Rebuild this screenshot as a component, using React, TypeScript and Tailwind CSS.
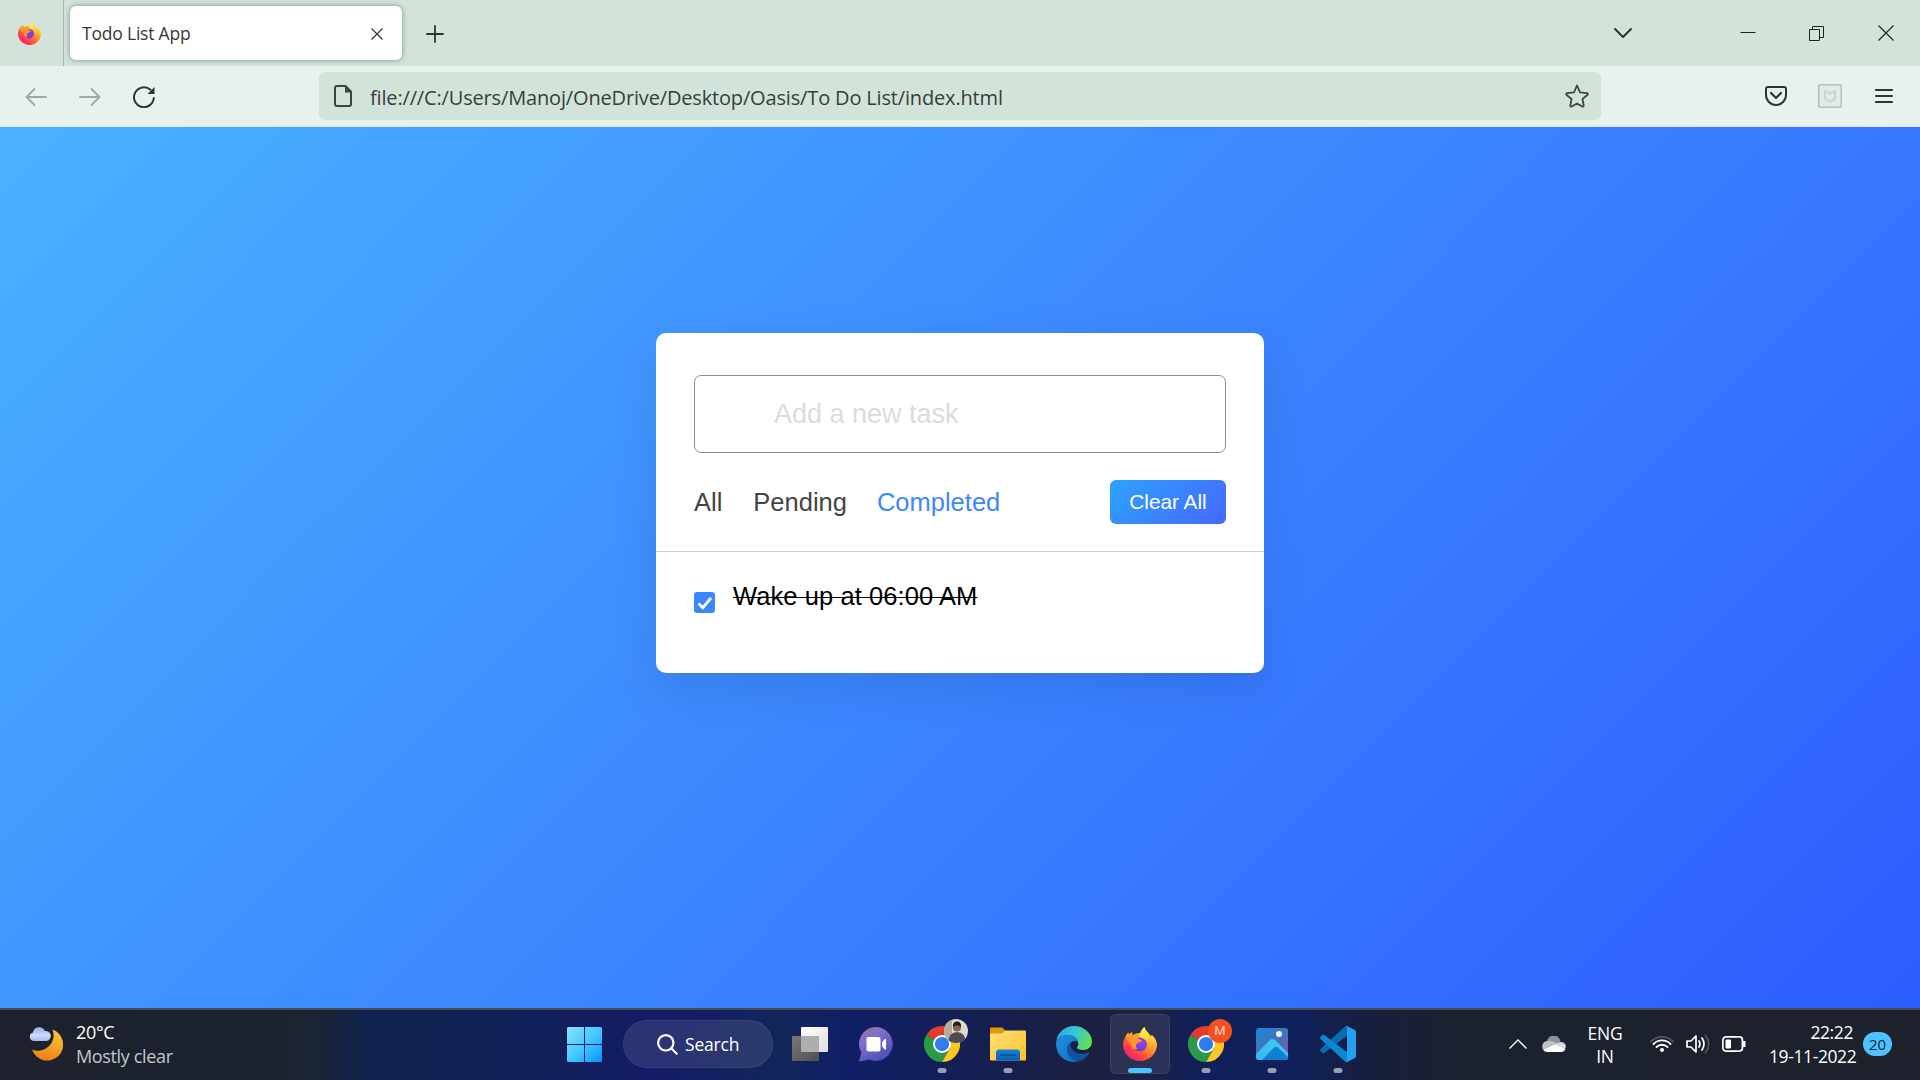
import React from "react";

const UI = "font-['Open_Sans','Noto_Sans',sans-serif]";

function FirefoxIcon({ id, className }: { id: string; className: string }) {
  return (
    <svg viewBox="0 0 34 34" className={className}>
      <defs>
        <linearGradient id={`${id}-body`} x1="0.85" y1="0.1" x2="0.2" y2="0.95">
          <stop offset="0" stopColor="#fff44f" />
          <stop offset="0.3" stopColor="#ffae2e" />
          <stop offset="0.6" stopColor="#ff6a30" />
          <stop offset="0.85" stopColor="#ff2f55" />
          <stop offset="1" stopColor="#f0208a" />
        </linearGradient>
        <linearGradient id={`${id}-ear`} x1="0.4" y1="0" x2="0.6" y2="1">
          <stop offset="0" stopColor="#fff650" />
          <stop offset="0.4" stopColor="#ffd93a" />
          <stop offset="1" stopColor="#ff9a2b" />
        </linearGradient>
        <radialGradient id={`${id}-globe`} cx="0.6" cy="0.3" r="0.8">
          <stop offset="0" stopColor="#a238f0" />
          <stop offset="0.6" stopColor="#7542e5" />
          <stop offset="1" stopColor="#5b3ac4" />
        </radialGradient>
      </defs>
      <path
        d="M3 8.5 5.2 5.6 5.9 7.6 9 5 9.4 8.2C12 6.5 15 5.8 17.6 6 18.2 3.7 19.6 1.6 21.4 0c.8 2.4 2 4.100 4.300 6.400.9 1 1.600 2 2.200 3.200L28.600 8C31.500 10 34 14 34 18.500 33 27.600 26 34 17 34S0 26.800 0 17.500C.1 14 1.400 11 3 8.500Z"
        fill={`url(#${id}-body)`}
      />
      <path
        d="M16 9.500C17 5 19 2 21.400 0c.8 2.400 2 4.100 4.300 6.400C29.500 10.500 31 17 26.500 24 28 17 23 11 16 9.500Z"
        fill={`url(#${id}-ear)`}
      />
      <circle cx="17" cy="17.500" r="6.800" fill={`url(#${id}-globe)`} />
      <path
        d="M3 8.500 5.200 5.600 5.900 7.600 9 5 9.400 8.600C11.600 8.600 13.500 9.800 14.600 11.600 16 12.600 18 12.600 19 13.200 18.300 15.400 15 15.200 14 16.600 12.400 18.200 12.500 20.500 14.500 22 10 22.500 7.600 19 8.400 15.500 6 16 4 14 3 8.500Z"
        fill="#ff9a28"
      />
    </svg>
  );
}

function ChromeIcon() {
  return (
    <svg viewBox="0 0 48 48" className="size-9">
      <path d="M24 24 3.200 12A24 24 0 0 1 44.800 12Z" fill="#e33b2e" />
      <path d="M24 24 3.200 12A24 24 0 0 0 24 48L34.400 30Z" fill="#2b9a48" />
      <path d="M24 12H44.800A24 24 0 0 1 24 48L34.400 30Z" fill="#fcc720" />
      <circle cx="24" cy="24" r="12" fill="#fff" />
      <circle cx="24" cy="24" r="9.500" fill="#2f7cf0" />
    </svg>
  );
}

function WeatherIcon() {
  return (
    <svg viewBox="0 0 34 34" className="h-[34px] w-[34px]">
      <defs>
        <linearGradient id="moon" x1="0.6" y1="0" x2="0.4" y2="1">
          <stop offset="0" stopColor="#f9c23c" />
          <stop offset="0.5" stopColor="#f5a623" />
          <stop offset="1" stopColor="#f07a1c" />
        </linearGradient>
        <linearGradient id="cloud" x1="0" y1="0" x2="0" y2="1">
          <stop offset="0" stopColor="#8fb0ea" />
          <stop offset="0.6" stopColor="#cddcf8" />
          <stop offset="1" stopColor="#9ab8ee" />
        </linearGradient>
      </defs>
      <path d="M23.500 2.500A16 16 0 1 1 3 22.500 15.500 15.500 0 0 0 23.500 2.500Z" fill="url(#moon)" />
      <path d="M4.500 14a4.300 4.300 0 0 1-.5-8.400A6.200 6.200 0 0 1 15.800 4a4.500 4.500 0 0 1 1.800 10Z" fill="url(#cloud)" />
    </svg>
  );
}

function WindowsIcon() {
  return (
    <svg viewBox="0 0 35 35" className="size-[35px]">
      <defs>
        <linearGradient id="win" x1="0" y1="0" x2="35" y2="35" gradientUnits="userSpaceOnUse">
          <stop offset="0" stopColor="#8be2ff" />
          <stop offset="0.5" stopColor="#45c8ff" />
          <stop offset="1" stopColor="#0a93fb" />
        </linearGradient>
      </defs>
      <path d="M1 0H17V17H0V1ZM18 0H34L35 1V17H18ZM0 18H17V35H1L0 34ZM18 18H35V34L34 35H18Z" fill="url(#win)" />
    </svg>
  );
}

function TaskViewIcon() {
  return (
    <svg viewBox="0 0 36 34" className="h-[34px] w-9">
      <defs>
        <linearGradient id="tvb" x1="0" y1="0" x2="1" y2="1">
          <stop offset="0" stopColor="#fff" />
          <stop offset="1" stopColor="#dedede" />
        </linearGradient>
        <linearGradient id="tvf" x1="0" y1="0" x2="1" y2="1">
          <stop offset="0" stopColor="#777" />
          <stop offset="1" stopColor="#4f4f4f" />
        </linearGradient>
      </defs>
      <rect x="9" y="0" width="27" height="25" rx="1" fill="url(#tvb)" />
      <rect x="0" y="9" width="27" height="25" rx="1" fill="url(#tvf)" />
      <rect x="9" y="9" width="18" height="16" fill="#aeaeae" />
    </svg>
  );
}

function ChatIcon() {
  return (
    <svg viewBox="0 0 34 35" className="h-[35px] w-[34px]">
      <defs>
        <linearGradient id="chat" x1="0" y1="0" x2="0.6" y2="1">
          <stop offset="0" stopColor="#a6729f" />
          <stop offset="0.4" stopColor="#7d70c8" />
          <stop offset="1" stopColor="#4d4ebd" />
        </linearGradient>
      </defs>
      <path d="M17.500 0A16.800 17 0 1 1 10 32.500L1.500 34.500C.5 34.700 0 34 .3 33L2.400 25.500A17 17 0 0 1 17.500 0Z" fill="url(#chat)" />
      <rect x="7.500" y="10" width="14" height="14.500" rx="2" fill="#fff" />
      <path d="M23 15.500 25.500 12.200Q27 11 27 13V21.500Q27 23.500 25.500 22.300L23 19Z" fill="#fff" />
    </svg>
  );
}

function FolderIcon() {
  return (
    <svg viewBox="0 0 36 34" className="h-[34px] w-9">
      <defs>
        <linearGradient id="fold" x1="0" y1="0" x2="1" y2="1">
          <stop offset="0" stopColor="#ffe07a" />
          <stop offset="1" stopColor="#fcc228" />
        </linearGradient>
        <linearGradient id="foldb" x1="0" y1="0" x2="0" y2="1">
          <stop offset="0" stopColor="#1583dd" />
          <stop offset="1" stopColor="#0862b0" />
        </linearGradient>
      </defs>
      <path d="M0 1.500Q0 .5 1 .5H12L16 4V12H0Z" fill="#df9b05" />
      <path d="M0 6.500H12L15.500 3.500H35Q36 3.500 36 4.500V32Q36 33.500 35 33.500H1Q0 33.500 0 32.500Z" fill="url(#fold)" />
      <path d="M6 33.500V26Q6 22.500 9 22.500H27Q30 22.500 30 26V33.500Z" fill="url(#foldb)" />
      <path d="M11 28H25" stroke="#0a4b8c" strokeWidth="1.500" strokeLinecap="round" />
    </svg>
  );
}

function EdgeIcon() {
  return (
    <svg viewBox="0 0 36 36" className="size-9">
      <defs>
        <linearGradient id="e1" x1="0" y1="0.2" x2="1" y2="0.5">
          <stop offset="0" stopColor="#2ba5e0" />
          <stop offset="0.5" stopColor="#35c8d6" />
          <stop offset="1" stopColor="#63df4f" />
        </linearGradient>
        <linearGradient id="e2" x1="0" y1="0" x2="0.5" y2="1">
          <stop offset="0" stopColor="#1f8fdc" />
          <stop offset="1" stopColor="#1479c8" />
        </linearGradient>
      </defs>
      <path d="M.3 15.500C1.500 6 9 0 18 0 28.500 0 36 8 36 15.500 36 20.500 32 24 27.500 24 23.500 24 21 22.700 21 21.500 21 20.700 22.300 20 22.300 17.500 22.300 13 18 9 12 9 6 9 1.500 12 .3 15.500Z" fill="url(#e1)" />
      <path d="M0 18C0 12 5.500 9 12 9 18 9 22 12.800 22.300 16.500 20.500 14 14.500 14.500 12.500 20 10.500 26 14.500 33 21.500 35.500 9.500 38 0 29 0 18Z" fill="url(#e2)" />
      <path d="M14.500 16.500C8 20.500 10.500 32.500 21 35.700 26.500 34.800 31 31.200 33.200 27.300 33.600 26.500 33 26 32.200 26.400 23 30.500 13.500 25 14.500 16.500Z" fill="#11539f" />
    </svg>
  );
}

function PhotosIcon() {
  return (
    <svg viewBox="0 0 32 32" className="size-8">
      <defs>
        <linearGradient id="ph" x1="0.2" y1="0" x2="0.8" y2="1">
          <stop offset="0" stopColor="#1c86d6" />
          <stop offset="0.5" stopColor="#4a6fbf" />
          <stop offset="1" stopColor="#8a4fa5" />
        </linearGradient>
        <linearGradient id="ph2" x1="0.8" y1="0" x2="0" y2="1">
          <stop offset="0" stopColor="#3ed0f2" />
          <stop offset="1" stopColor="#35b4ec" />
        </linearGradient>
        <clipPath id="phc">
          <rect width="32" height="32" rx="3" />
        </clipPath>
      </defs>
      <g clipPath="url(#phc)">
        <rect width="32" height="32" fill="url(#ph)" />
        <path d="M13.500 12.500Q16.500 9.500 19.500 12.500L34 27V34H-2V28Z" fill="url(#ph2)" />
        <path d="M6 32 18 19.500Q20 17.800 22 19.500L34 31V34H5Z" fill="#0e80d2" />
        <circle cx="23" cy="6" r="3" fill="#f1f4fa" />
      </g>
    </svg>
  );
}

function VsCodeIcon() {
  return (
    <svg viewBox="0 0 100 100" className="size-9">
      <path d="M96.500 10.800 75.900.9C73.500-.3 70.600.2 68.800 2.100L1.400 63.600C-.5 65.200-.5 68.100 1.400 69.700L6.900 74.800C8.400 76.100 10.600 76.200 12.200 75L93.400 13.400C96.100 11.300 100 13.300 100 16.700V16.400C100 14 98.600 11.800 96.500 10.800Z" fill="#0b6bb0" />
      <path d="M96.500 89.200 75.900 99.100C73.500 100.300 70.600 99.800 68.800 97.900L1.400 36.400C-.5 34.800-.5 31.900 1.400 30.300L6.900 25.200C8.400 23.900 10.600 23.800 12.200 25L93.400 86.600C96.100 88.700 100 86.700 100 83.300V83.600C100 86 98.600 88.200 96.500 89.200Z" fill="#0b87d4" />
      <path d="M75.900 99.100C73.500 100.300 70.600 99.800 68.800 97.900 71.100 100.200 75 98.600 75 95.300V4.700C75 1.400 71.100-.2 68.800 2.100 70.600.2 73.500-.3 75.900.9L96.500 10.800C98.600 11.800 100 14 100 16.400V83.600C100 86 98.600 88.200 96.500 89.200Z" fill="#259ff0" />
    </svg>
  );
}

function TabStrip() {
  return (
    <div className="flex h-[66px] shrink-0 items-center bg-[#d2e4da]">
      <div className="flex h-full w-16 items-center border-r border-[#a4b5ac] pl-[18px]">
        <FirefoxIcon id="ff-tab" className="size-[23px]" />
      </div>
      <div className="ml-1.5 flex h-[54px] w-[332px] items-center justify-between rounded-md bg-white pr-[19px] pl-3 shadow-[0_0_5px_rgba(60,85,70,0.6)]">
        <span className="text-[17.500px] tracking-[-0.200px] text-[#33383a]">Todo List App</span>
        <svg viewBox="0 0 12 12" className="mt-px size-3" stroke="#2f3633" strokeWidth="1.200">
          <path d="M.5.5 11.500 11.500M11.500.5.5 11.500" />
        </svg>
      </div>
      <svg viewBox="0 0 18 18" className="mt-0.5 ml-6 size-[18px]" stroke="#2c3531" strokeWidth="1.800" strokeLinecap="round">
        <path d="M9 1V17M1 9H17" />
      </svg>
      <svg viewBox="0 0 20 12" className="ml-auto h-3 w-5" fill="none" stroke="#2c3531" strokeWidth="2" strokeLinecap="round" strokeLinejoin="round">
        <path d="M2 2 10 10 18 2" />
      </svg>
      <div className="mr-[26px] ml-[107px] flex items-center">
        <svg viewBox="0 0 16 16" className="size-4" stroke="#1d2622">
          <path d="M.5 7.500H15.500" />
        </svg>
        <svg viewBox="0 0 15 15" className="ml-[53px] size-[15px]" fill="none" stroke="#1d2622">
          <path d="M.5 3.500H10.500V14.500H.5ZM3.500 3.500V.5H14.500V11.500H10.500" />
        </svg>
        <svg viewBox="0 0 16 16" className="ml-[54px] size-4" stroke="#1d2622" strokeWidth="1.200">
          <path d="M.5.5 15.500 15.500M15.500.5.5 15.500" />
        </svg>
      </div>
    </div>
  );
}

function Toolbar() {
  return (
    <div className="flex h-[61px] shrink-0 items-center border-b border-[#dbe6df] bg-[#e8f2ec]">
      <svg viewBox="0 0 22 20" className="mt-0.5 ml-[25px] h-5 w-[22px]" fill="none" stroke="#9fa9a3" strokeWidth="1.800" strokeLinecap="round" strokeLinejoin="round">
        <path d="M21 10H1.500M9.500 2 1.500 10 9.500 18" />
      </svg>
      <svg viewBox="0 0 22 20" className="mt-0.5 ml-8 h-5 w-[22px]" fill="none" stroke="#9fa9a3" strokeWidth="1.800" strokeLinecap="round" strokeLinejoin="round">
        <path d="M1 10H20.500M12.500 2 20.500 10 12.500 18" />
      </svg>
      <svg viewBox="0 0 22 22" className="mt-0.5 ml-8 size-[22px]" fill="none" stroke="#2c3531" strokeWidth="2" strokeLinecap="round">
        <path d="M20.800 12A9.900 9.900 0 1 1 17.500 3.800" />
        <path d="M21.500 1V8H14.500Z" fill="#2c3531" stroke="none" />
      </svg>
      <div className="ml-[164px] flex h-12 w-[1282px] items-center rounded-md bg-[#d2e4da] pr-3 pl-[15px]">
        <svg viewBox="0 0 18 22" className="h-[22px] w-[18px]" fill="none" stroke="#3d4742" strokeWidth="2" strokeLinejoin="round">
          <path d="M3 1H11.500L17 6.500V19Q17 21 15 21H3Q1 21 1 19V3Q1 1 3 1Z" />
          <path d="M11 1V7.500H17.500Z" fill="#3d4742" stroke="none" />
        </svg>
        <span className="mt-[3px] ml-[18px] text-[20px] tracking-[-0.160px] whitespace-nowrap text-[#363f3a]">
          file:///C:/Users/Manoj/OneDrive/Desktop/Oasis/To Do List/index.html
        </span>
        <svg viewBox="0 0 24 24" className="ml-auto size-6" fill="none" stroke="#3d4742" strokeWidth="1.800" strokeLinejoin="round">
          <path d="M12 1.500 15 8.300 22 9.200Q23.500 9.800 22.300 11L17.500 15 18.700 21.600Q18.400 23 17.200 22.500L12 19.500 6.800 22.500Q5.500 23 5.300 21.600L6.500 15 1.700 11Q.5 9.800 2 9.200L9 8.300Z" />
        </svg>
      </div>
      <svg viewBox="0 0 22 20" className="ml-[164px] h-5 w-[22px]" fill="none" stroke="#2c3531" strokeWidth="2" strokeLinecap="round" strokeLinejoin="round">
        <path d="M3 1H19Q21 1 21 3V9A10 10 0 0 1 1 9V3Q1 1 3 1Z" />
        <path d="M6 7 11 12 16 7" strokeWidth="2.200" />
      </svg>
      <svg viewBox="0 0 24 24" className="ml-[31px] size-6" fill="none">
        <rect x=".75" y=".75" width="22.500" height="22.500" rx="1" fill="#e4eae9" stroke="#b4bdc8" strokeWidth="1.500" />
        <path d="M7 7 12 9.500 17 7V15L12 17.500 7 15Z" stroke="#ccd4d6" strokeWidth="2.200" />
      </svg>
      <svg viewBox="0 0 18 16" className="ml-[33px] h-4 w-[18px]" stroke="#2c3531" strokeWidth="2" strokeLinecap="round">
        <path d="M1 2H17M1 8H17M1 14H17" />
      </svg>
    </div>
  );
}

function TodoCard() {
  return (
    <div className="flex h-[340px] w-[608px] flex-col rounded-[10px] bg-white pt-[42px] font-['Liberation_Sans',Arial,sans-serif] shadow-[0_15px_45px_rgba(0,0,0,0.1)]">
      <div className="mx-[38px] flex h-[78px] items-center rounded-[7px] border border-[#8e8e8e] pl-[79px] text-[27px] text-[#dcdcdc]">
        Add a new task
      </div>
      <div className="mt-[27px] flex h-[72px] items-start justify-between border-b border-[#ccc] px-[38px]">
        <div className="flex h-11 items-center text-[25.500px] text-[#444]">
          <span>All</span>
          <span className="ml-[31px]">Pending</span>
          <span className="ml-[30px] text-[#3c87ff]">Completed</span>
        </div>
        <button className="h-11 w-[116px] rounded-md bg-[linear-gradient(135deg,#2ea2fc,#4568ff)] text-[20.800px] text-white">
          Clear All
        </button>
      </div>
      <div className="mt-[29px] flex px-[38px]">
        <span className="mt-[11px] flex size-[21px] items-center justify-center rounded-[3px] bg-[#3c87ff]">
          <svg viewBox="0 0 16 14" className="h-3.5 w-4" fill="none" stroke="#fff" strokeWidth="2.800">
            <path d="M1.500 7.500 5.800 11.700 14 2" />
          </svg>
        </span>
        <span className="ml-[18px] text-[25.500px] leading-[30px] tracking-[0.080px] text-black line-through decoration-1">Wake up at 06:00 AM</span>
      </div>
    </div>
  );
}

function TaskCell({ children, running, active }: { children: React.ReactNode; running?: boolean; active?: boolean }) {
  return (
    <div
      className={
        active
          ? "relative mx-[3px] flex h-[60px] w-[60px] items-center justify-center rounded-md border border-white/8 bg-white/8"
          : "relative flex h-[60px] w-[66px] items-center justify-center"
      }
    >
      {children}
      {running && <span className="absolute bottom-px left-1/2 h-[5px] w-[9px] -translate-x-1/2 rounded-full bg-[#9a9db5]" />}
      {active && <span className="absolute bottom-0 left-1/2 h-[5px] w-6 -translate-x-1/2 rounded-full bg-[#4cc2ff]" />}
    </div>
  );
}

function Taskbar() {
  return (
    <div className="flex h-[72px] shrink-0 items-center border-t-2 border-[#454b55] bg-[linear-gradient(90deg,#1d212b_0px,#1b2431_310px,#10234f_370px,#12205a_550px,#141c66_660px,#12265a_780px,#101f66_850px,#151f4e_1000px,#1c2040_1080px,#1a2146_1150px,#0f205a_1200px,#10215a_1300px,#171f3d_1370px,#1b212f_1450px,#1d212b_1920px)] pb-0.5 text-white">
      <div className="flex w-[551px] items-center pl-[29px]">
        <WeatherIcon />
        <div className="ml-[13px] text-[18px] leading-6 tracking-[-0.350px]">
          <div>20°C</div>
          <div className="text-[#c3c6cb]">Mostly clear</div>
        </div>
      </div>
      <div className="flex items-center">
        <div className="flex w-[66px] justify-center">
          <WindowsIcon />
        </div>
        <div className="ml-1.5 flex h-12 w-[150px] items-center rounded-full border border-white/6 bg-white/10 pl-[33px]">
          <svg viewBox="0 0 21 21" className="size-[21px]" fill="none" stroke="#fff" strokeWidth="2.200" strokeLinecap="round">
            <circle cx="8.800" cy="8.800" r="7.700" />
            <path d="M14.300 14.300 19.700 19.700" />
          </svg>
          <span className="ml-[7px] text-[17.500px] tracking-[-0.200px]">Search</span>
        </div>
        <div className="ml-1 flex">
          <TaskCell><TaskViewIcon /></TaskCell>
          <TaskCell><ChatIcon /></TaskCell>
          <TaskCell running>
            <ChromeIcon />
            <svg viewBox="0 0 24 24" className="absolute top-[5px] left-[35px] size-6">
              <defs>
                <clipPath id="avatar"><circle cx="12" cy="12" r="12" /></clipPath>
              </defs>
              <g clipPath="url(#avatar)">
                <rect width="24" height="24" fill="#ded8cf" />
                <rect width="8" height="24" fill="#b5aa9c" />
                <path d="M4 24Q5 13 13 13 21 13 22 24Z" fill="#4b4b50" />
                <circle cx="13" cy="8.500" r="4" fill="#8a5f4c" />
                <path d="M9 8Q8.500 2.500 13 2.500 17.500 2.500 17 8 13 4.500 9 8Z" fill="#251e1d" />
              </g>
            </svg>
          </TaskCell>
          <TaskCell running><FolderIcon /></TaskCell>
          <TaskCell><EdgeIcon /></TaskCell>
          <TaskCell active><FirefoxIcon id="ff-bar" className="size-[34px]" /></TaskCell>
          <TaskCell running>
            <ChromeIcon />
            <span className="absolute top-[5px] left-[35px] flex size-6 items-center justify-center rounded-full bg-[#f4511e] font-[Roboto,sans-serif] text-[13px] text-[#fbd5c8]">M</span>
          </TaskCell>
          <TaskCell running><PhotosIcon /></TaskCell>
          <TaskCell running><VsCodeIcon /></TaskCell>
        </div>
      </div>
      <div className="ml-auto flex items-center pr-[28px]">
        <svg viewBox="0 0 18 10" className="h-2.5 w-[18px]" fill="none" stroke="#fff" strokeWidth="1.300">
          <path d="M.5 9.500 9 1 17.500 9.500" />
        </svg>
        <svg viewBox="0 0 24 16" className="ml-[15px] h-4 w-6">
          <path d="M5 7A6.500 6.500 0 0 1 18.500 5.500L12 11Z" fill="#8e9196" />
          <path d="M5.500 5A5.500 5.500 0 0 0 2 14.500L15 8Q10 4 5.500 5Z" fill="#c0c2c5" />
          <path d="M12 9Q18 4.500 21.500 6.500 24 8 24 11L22 14Z" fill="#d8d9db" />
          <path d="M1.500 14 13 8.500 23.500 13Q22 16 19 16H5Q2.500 16 1.500 14Z" fill="#fff" />
        </svg>
        <div className="mt-0.5 ml-[21px] w-9 text-center text-[17.500px] leading-[23px] tracking-[-0.200px]">
          <div>ENG</div>
          <div>IN</div>
        </div>
        <svg viewBox="0 0 24 18" className="ml-[27px] h-[18px] w-6" fill="none" stroke="#fff" strokeWidth="1.800" strokeLinecap="round">
          <path d="M1 6.500A15.500 15.500 0 0 1 23 6.500" stroke="#50555e" />
          <path d="M3.500 9A12 12 0 0 1 20.500 9M6.500 12A7.800 7.800 0 0 1 17.500 12" />
          <circle cx="12" cy="15" r="2" fill="#fff" stroke="none" />
        </svg>
        <svg viewBox="0 0 24 20" className="ml-3 h-5 w-6" fill="none" stroke="#fff" strokeWidth="1.700" strokeLinecap="round" strokeLinejoin="round">
          <path d="M1 7H5L10 2V18L5 13H1Z" />
          <path d="M13 7Q15 10 13 13M16 4Q20 10 16 16" />
          <path d="M19.500 1.500Q26 10 19.500 18.500" stroke="#50555e" />
        </svg>
        <svg viewBox="0 0 24 16" className="ml-3 h-4 w-6" fill="none" stroke="#fff" strokeWidth="1.700">
          <rect x=".9" y=".9" width="19.500" height="14.200" rx="3" />
          <rect x="3.500" y="3.500" width="5.500" height="9" rx="1" fill="#fff" stroke="none" />
          <path d="M22 5V11" strokeWidth="3" />
        </svg>
        <div className="ml-[23px] w-[84px] text-right text-[17.500px] leading-6 tracking-[-0.400px] whitespace-nowrap">
          <div>22:22</div>
          <div>19-11-2022</div>
        </div>
        <span className="ml-[10px] flex h-6 w-[29px] items-center justify-center rounded-full bg-[#4cc2ff] text-[15px] text-[#0d2230]">20</span>
      </div>
    </div>
  );
}

export default function App() {
  return (
    <div className={`flex h-[1080px] w-[1920px] flex-col overflow-hidden ${UI}`}>
      <TabStrip />
      <Toolbar />
      <main className="flex flex-1 justify-center bg-[linear-gradient(135deg,#4ab1ff,#2d5cfe)] pt-[206px]">
        <TodoCard />
      </main>
      <Taskbar />
    </div>
  );
}
